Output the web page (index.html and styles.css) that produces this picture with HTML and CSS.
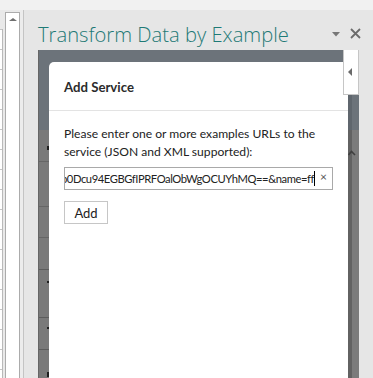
FILE: index.html
```html
<!DOCTYPE html>
<html lang="en">
<head>
<meta charset="utf-8">
<title>Transform Data by Example</title>
<link rel="stylesheet" href="styles.css">
</head>
<body>
<div class="app">
  <div class="topbar"></div>
  <div class="main">
    <div class="sheet">
      <div class="rows"></div>
      <div class="vscroll">
        <div class="vscroll-up"><span class="tri-up"></span></div>
      </div>
      <div class="gutter"></div>
    </div>
    <div class="pane">
      <div class="pane-head">
        <h1 class="pane-title">Transform Data by Example</h1>
        <div class="pane-tools">
          <svg class="tool-menu" width="8" height="5" viewBox="0 0 8 5"><path d="M0 0H8L4 4.5Z" fill="#777"/></svg>
          <svg class="tool-close" width="11" height="11" viewBox="0 0 11 11"><path d="M1 1L10 10M10 1L1 10" stroke="#6b6b6b" stroke-width="1.8"/></svg>
        </div>
      </div>
      <div class="stage">
        <div class="edge-left">
          <span class="mark m1"></span>
          <span class="mark m2"></span>
          <span class="mark m3"></span>
          <span class="mark m4"></span>
        </div>
        <div class="dialog">
          <div class="dialog-head">Add Service</div>
          <div class="dialog-body">
            <p class="dialog-text">Please enter one or more examples URLs to the service (JSON and XML supported):</p>
            <div class="field">
              <div class="field-text"><span>p0Dcu94EGBGfIPRFOalObWgOCUYhMQ==&amp;name=ff</span></div>
              <span class="caret"></span>
              <span class="field-clear">×</span>
            </div>
            <button class="btn">Add</button>
          </div>
        </div>
        <div class="edge-right">
          <div class="edge-right-dark"></div>
          <div class="edge-right-light">
            <svg class="chev" width="8" height="6" viewBox="0 0 8 6"><path d="M0.5 5L3.5 1.5L7 5" fill="none" stroke="#3f3f3f" stroke-width="1.6"/></svg>
          </div>
        </div>
        <div class="collapse-tab"><span class="tri-left"></span></div>
      </div>
    </div>
  </div>
</div>
</body>
</html>
```

FILE: styles.css
```css
* { box-sizing: border-box; }
html, body { margin: 0; padding: 0; }
body {
  width: 373px;
  height: 378px;
  overflow: hidden;
  background: #e6e6e6;
  font-family: Lato, "Open Sans", sans-serif;
}
.app {
  display: flex;
  flex-direction: column;
  height: 378px;
}
.topbar {
  height: 10px;
  background: #f1f1f1;
  flex: none;
}
.main {
  flex: 1;
  display: flex;
  min-height: 0;
}

/* spreadsheet edge on the left */
.sheet {
  width: 24px;
  flex: none;
  display: flex;
  background: #e9e9e9;
}
.rows {
  width: 3px;
  margin-top: 19px;
  border-right: 1px solid #b9b9b9;
  background: #fff repeating-linear-gradient(to bottom, #c4c4c4 0 1px, transparent 1px 20px);
}
.vscroll {
  width: 15px;
  margin-left: 2px;
  margin-top: 2px;
  border: 1px solid #ababab;
  border-bottom: none;
  background: #fff;
}
.vscroll-up {
  height: 13px;
  display: flex;
  justify-content: center;
  padding-top: 5px;
}
.tri-up {
  width: 0;
  height: 0;
  border-left: 4px solid transparent;
  border-right: 4px solid transparent;
  border-bottom: 3px solid #6f6f6f;
}
.gutter {
  width: 4px;
  border-right: 1px solid #c4c4c4;
  background: #ececec;
}

/* task pane */
.pane {
  flex: 1;
  display: flex;
  flex-direction: column;
  padding-left: 14px;
  padding-right: 15px;
  background: #e6e6e6;
}
.pane-head {
  height: 40px;
  flex: none;
  display: flex;
  align-items: flex-start;
  justify-content: space-between;
  margin-right: -2px;
}
.pane-title {
  margin: 12px 0 0 0;
  font-family: "Open Sans", sans-serif;
  font-weight: 300;
  font-size: 20.2px;
  line-height: 25px;
  color: #1f7a76;
  white-space: nowrap;
}
.pane-tools {
  display: flex;
  align-items: center;
  gap: 10px;
  margin-top: 18px;
}
.tool-menu { display: block; margin-top: 1px; }
.tool-close { display: block; }

.stage {
  position: relative;
  flex: 1;
  display: flex;
  min-height: 0;
  background: linear-gradient(to bottom, #6c737a 0 80px, #7c7c7c 80px);
}
.edge-left {
  position: relative;
  width: 11px;
  flex: none;
  background:
    linear-gradient(to right, #666 0 1px, transparent 1px),
    linear-gradient(to bottom, #6c737a 0 80px, transparent 80px),
    linear-gradient(to bottom, transparent 0 219px, #5d5d5d 219px 220px, transparent 220px 267px, #5d5d5d 267px 268px, transparent 268px 299px, #5d5d5d 299px 300px, transparent 300px),
    linear-gradient(to bottom, transparent 0 111px, #666 111px 112px, transparent 112px 156px, #666 156px 157px, transparent 157px 187px, #666 187px 188px, transparent 188px),
    #7a7a7a;
}
.mark {
  position: absolute;
  right: 0;
  width: 2px;
  background: #1e1e1e;
}
.m1 { top: 96px; height: 4px; }
.m2 { top: 231px; height: 2px; }
.m3 { top: 277px; height: 2px; }
.m4 { top: 322px; height: 5px; }

.dialog {
  flex: 1;
  margin-top: 12px;
  background: #fff;
  border-radius: 5px 5px 0 0;
  display: flex;
  flex-direction: column;
}
.dialog-head {
  height: 49px;
  flex: none;
  display: flex;
  align-items: center;
  padding-left: 15px;
  padding-top: 1px;
  border-bottom: 1px solid #e3e3e3;
  font-weight: 700;
  font-size: 13.2px;
  color: #2b2b2b;
}
.dialog-body {
  padding: 14px 15px 0 15px;
}
.dialog-text {
  margin: 0;
  font-size: 12.1px;
  line-height: 17.5px;
  color: #222;
}
.field {
  margin-top: 7px;
  width: 269px;
  height: 23px;
  border: 1px solid #a9a9a9;
  display: flex;
  align-items: center;
  padding-right: 4px;
}
.field-text {
  width: 249px;
  flex: none;
  overflow: hidden;
  display: flex;
  justify-content: flex-end;
  white-space: nowrap;
  font-size: 11.2px;
  letter-spacing: -0.42px;
  color: #222;
}
.field-text span { flex: none; }
.caret {
  width: 1px;
  height: 15px;
  background: #000;
  flex: none;
}
.field-clear {
  margin-left: 5px;
  font-size: 12px;
  line-height: 12px;
  color: #555;
  margin-top: -4px;
}
.btn {
  display: block;
  margin-top: 11px;
  width: 44px;
  height: 23px;
  padding: 0;
  border: 1px solid #c6c6c6;
  background: #fff;
  font-family: Lato, sans-serif;
  font-size: 13px;
  color: #222;
}

.edge-right {
  width: 11px;
  flex: none;
  display: flex;
}
.edge-right-dark {
  width: 4px;
  background: linear-gradient(to bottom, #5f666d 0 80px, #626262 80px);
}
.edge-right-light {
  flex: 1;
  background: linear-gradient(to bottom, #6c737a 0 80px, #7b7b7b 80px);
}
.chev {
  display: block;
  margin: 100px 0 0 -4px;
}
.collapse-tab {
  position: absolute;
  top: 0;
  right: 0;
  width: 16px;
  height: 45px;
  background: #fff;
  border: 1px solid #c6c6c6;
  border-top: none;
  display: flex;
  align-items: center;
  justify-content: center;
}
.tri-left {
  width: 0;
  height: 0;
  border-top: 4px solid transparent;
  border-bottom: 4px solid transparent;
  border-right: 4px solid #6a6a6a;
  margin-left: -2px;
}
```
